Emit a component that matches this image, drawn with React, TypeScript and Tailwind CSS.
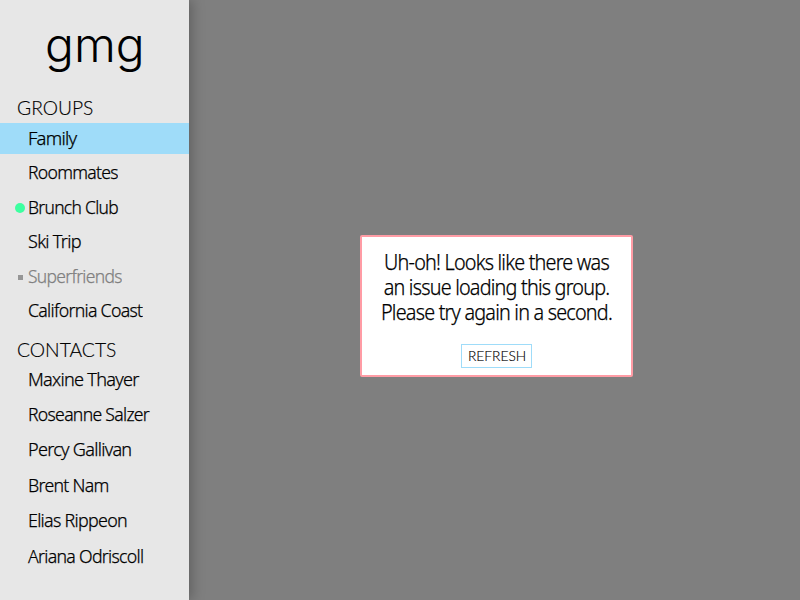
import { useLayoutEffect, useRef } from "react";

type FitProps = { text: string; width: number; className?: string };

// Condenses text horizontally so that its longest line fills the given width.
function Fit({ text, width, className = "" }: FitProps) {
  const ref = useRef<HTMLSpanElement>(null);
  useLayoutEffect(() => {
    const el = ref.current;
    if (el) el.style.transform = `scaleX(${width / el.offsetWidth})`;
  }, [text, width]);
  return (
    <span className="block" style={{ width }}>
      <span ref={ref} className={`inline-block origin-left whitespace-pre ${className}`}>
        {text}
      </span>
    </span>
  );
}

const groups = [
  { name: "Family", width: 48, row: "h-[31px] bg-[#9fdcf9]" },
  { name: "Roommates", width: 90, row: "h-[37px] pt-[3px]" },
  { name: "Brunch Club", width: 90, row: "h-[34px] pt-px", mark: "online" },
  { name: "Ski Trip", width: 53, row: "h-[34px] pt-px" },
  { name: "Superfriends", width: 94, row: "h-[35px] pt-[2px] text-[#808080]", mark: "muted" },
  { name: "California Coast", width: 114, row: "h-[36px] pt-px" },
];

const contacts = [
  { name: "Maxine Thayer", width: 111, row: "h-[35px]" },
  { name: "Roseanne Salzer", width: 121, row: "h-[35px]" },
  { name: "Percy Gallivan", width: 103, row: "h-[36px]" },
  { name: "Brent Nam", width: 81, row: "h-[35px]" },
  { name: "Elias Rippeon", width: 99, row: "h-[36px]" },
  { name: "Ariana Odriscoll", width: 115, row: "h-[35px]" },
];

const message = "Uh-oh! Looks like there was\nan issue loading this group.\nPlease try again in a second.";

export default function App() {
  return (
    <div className="flex h-[600px] w-[800px] overflow-hidden bg-[#7f7f7f] font-['Noto_Sans',sans-serif] text-black">
      <aside className="z-10 h-full w-[189px] shrink-0 bg-[#e7e7e7] shadow-[3px_0_12px_rgba(0,0,0,0.25)]">
        <h1 className="flex h-[97px] items-start pt-[15px] pl-[45px]">
          <Fit text="gmg" width={100} className="font-['Inter',sans-serif] text-[46.5px] leading-[60px] font-light" />
        </h1>
        <h2 className="h-[26px] pl-[17px]">
          <Fit text="GROUPS" width={76} className="font-['Lato',sans-serif] text-[19.5px] leading-[20px] font-light [-webkit-text-stroke:0.15px]" />
        </h2>
        <ul className="text-[18.8px] leading-[30px] font-light tracking-[-0.04em] [-webkit-text-stroke:0.25px]">
          {groups.map((g) => (
            <li key={g.name} className={`flex ${g.row}`}>
              <span className="flex h-[30px] w-[28px] shrink-0 items-center">
                {g.mark === "online" && <span className="mt-[2px] ml-[15px] size-[10px] rounded-full bg-[#3dffa0]" />}
                {g.mark === "muted" && <span className="mt-[2px] ml-[18px] size-[5px] bg-[#969696]" />}
              </span>
              <Fit text={g.name} width={g.width} />
            </li>
          ))}
        </ul>
        <h2 className="h-[34px] pt-[9px] pl-[17px]">
          <Fit text="CONTACTS" width={99} className="font-['Lato',sans-serif] text-[19.5px] leading-[20px] font-light [-webkit-text-stroke:0.15px]" />
        </h2>
        <ul className="text-[18.8px] leading-[30px] font-light tracking-[-0.04em] [-webkit-text-stroke:0.25px]">
          {contacts.map((c) => (
            <li key={c.name} className={`pl-[28px] ${c.row}`}>
              <Fit text={c.name} width={c.width} />
            </li>
          ))}
        </ul>
      </aside>
      <main className="flex-1 pt-[235px] pl-[171px]">
        <section className="flex h-[142px] w-[273px] flex-col items-center rounded-[2px] border-2 border-[#ff9ca5] bg-white pt-[13px]">
          <p className="h-[75px]">
            <Fit
              text={message}
              width={231}
              className="text-center text-[21px] leading-[25px] font-light tracking-[-0.04em] [-webkit-text-stroke:0.25px]"
            />
          </p>
          <button className="mt-[19px] flex h-[24px] w-[71px] items-center justify-center border border-[#9fdcf9] pb-[2px] pl-px">
            <Fit text="REFRESH" width={58} className="font-['Lato',sans-serif] text-[14px] leading-[20px] font-light [-webkit-text-stroke:0.15px]" />
          </button>
        </section>
      </main>
    </div>
  );
}
